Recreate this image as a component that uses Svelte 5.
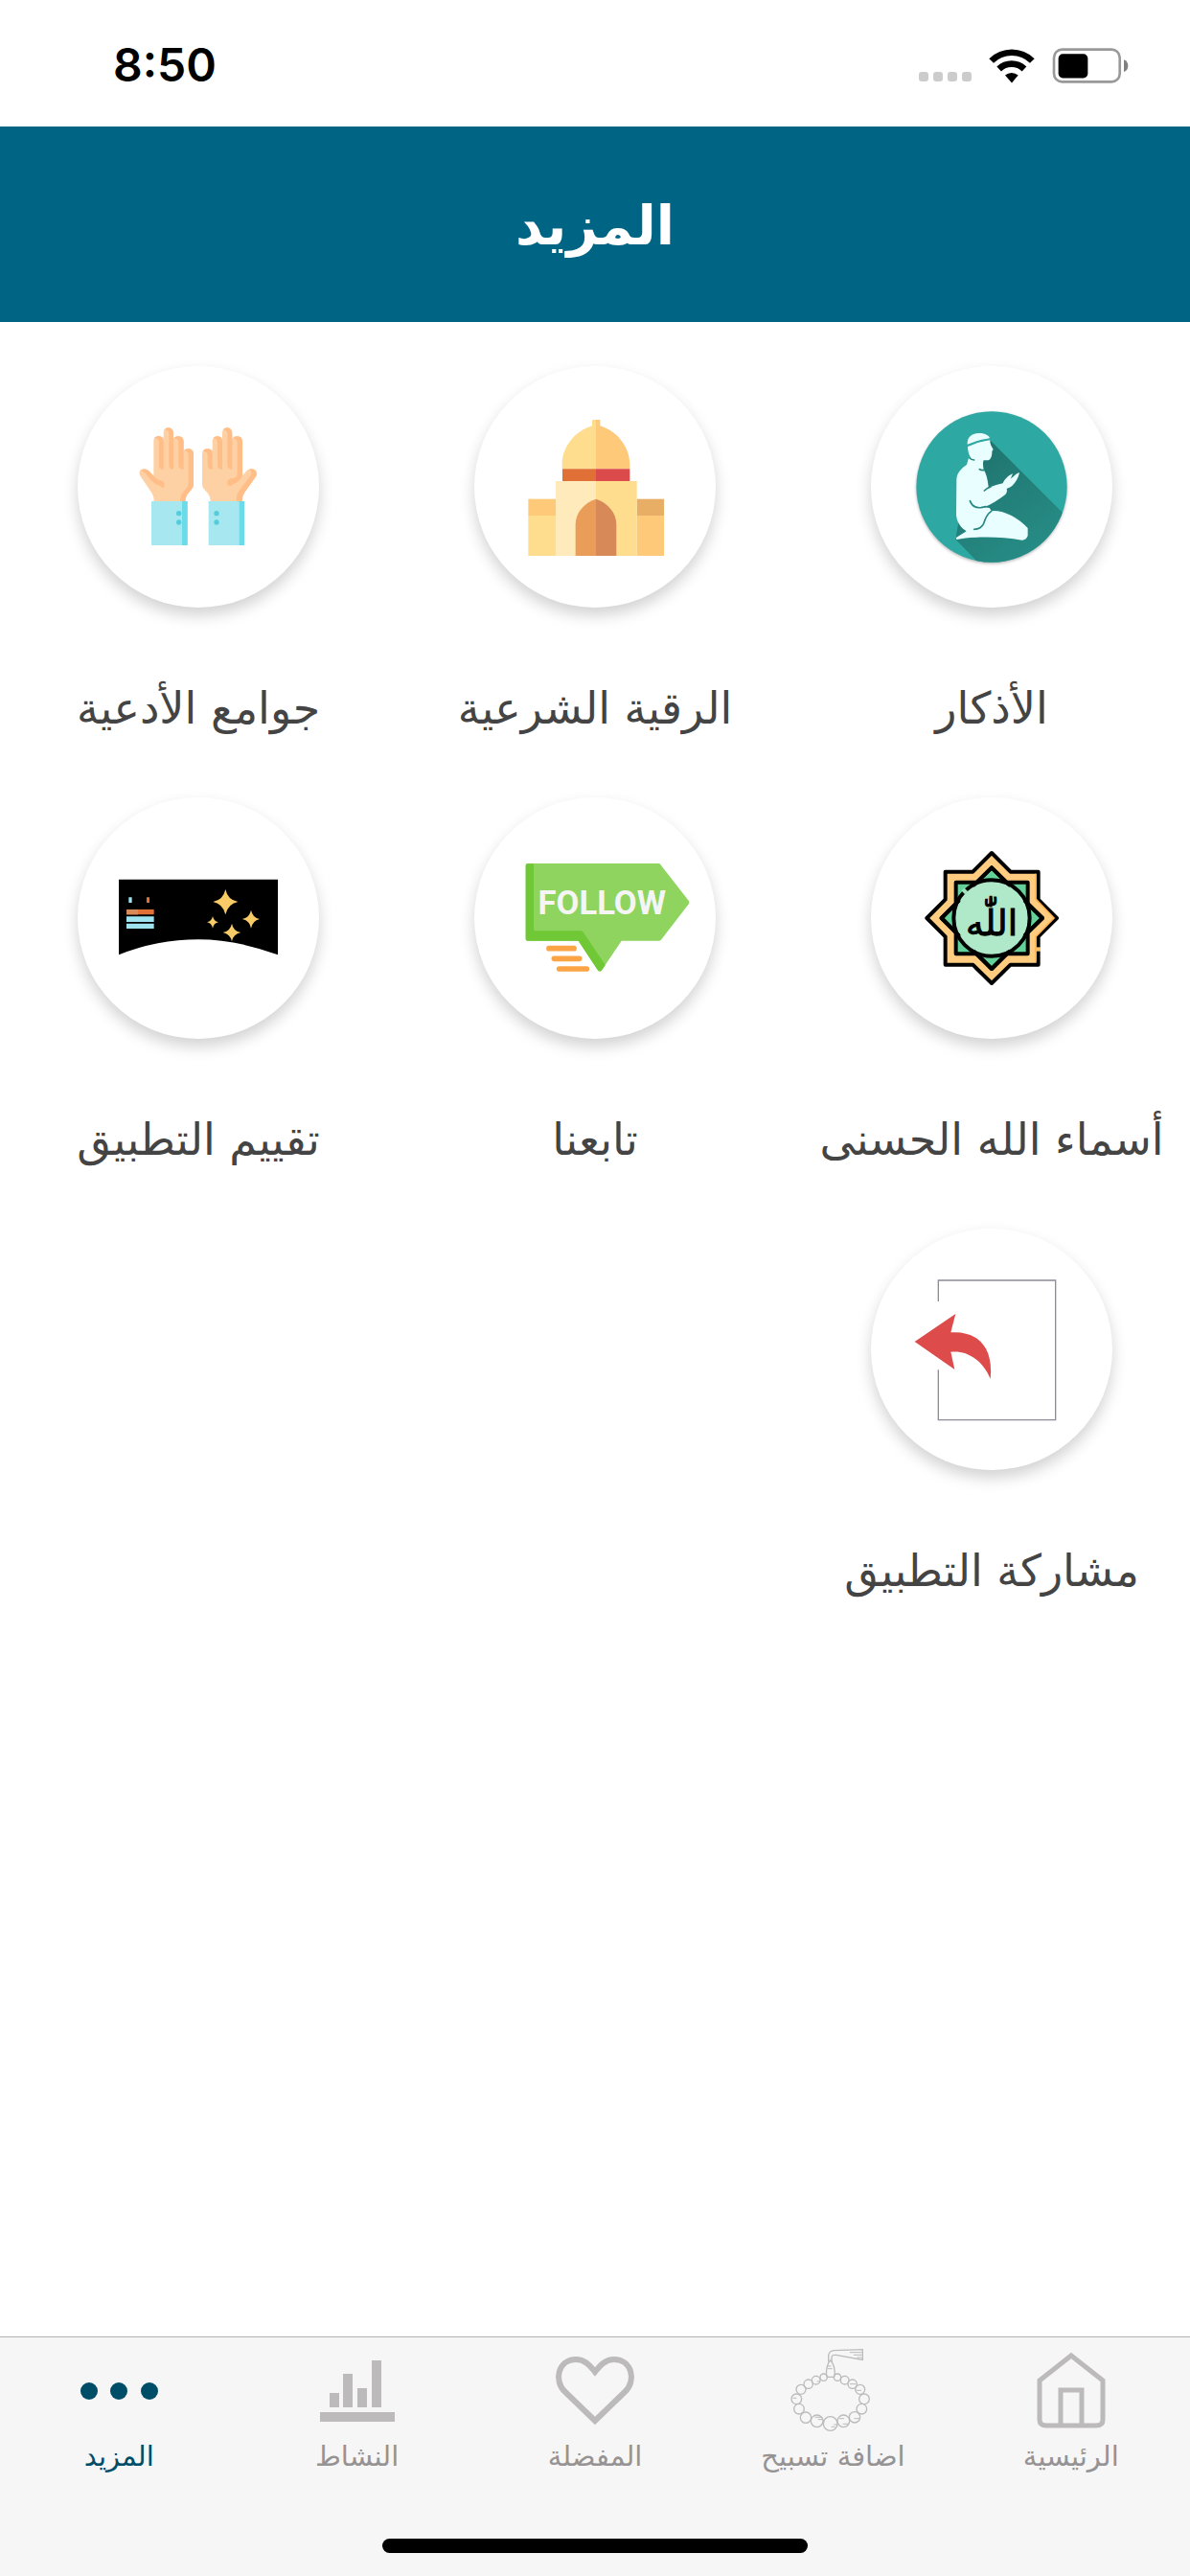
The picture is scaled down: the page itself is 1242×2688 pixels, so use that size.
<script lang="ts">
    type Item = { id: string; label: string };

    const items: Item[] = [
        { id: "athkar", label: "الأذكار" },
        { id: "ruqyah", label: "الرقية الشرعية" },
        { id: "duaa", label: "جوامع الأدعية" },
        { id: "names", label: "أسماء الله الحسنى" },
        { id: "follow", label: "تابعنا" },
        { id: "rate", label: "تقييم التطبيق" },
        { id: "share", label: "مشاركة التطبيق" },
    ];

    const tabs: Item[] = [
        { id: "home", label: "الرئيسية" },
        { id: "tasbih", label: "اضافة تسبيح" },
        { id: "favorites", label: "المفضلة" },
        { id: "activity", label: "النشاط" },
        { id: "more", label: "المزيد" },
    ];

    let active = $state("more");

    // beads of the tasbih: [cx, cy, r]
    const beads = [
        [180, 125, 11], [223, 125, 11], [156, 134, 13], [246, 134, 13],
        [132, 146, 14], [270, 146, 14], [109, 163, 15], [294, 163, 15],
        [95, 193, 16], [307, 193, 16], [103, 224, 16], [299, 224, 16],
        [124, 251, 17], [277, 250, 17], [159, 262, 19], [242, 262, 19],
        [201, 270, 22],
    ];
</script>

<div class="screen" dir="rtl">
    <div class="status" dir="ltr">
        <time>8:50</time>
        <div class="signals">
            <span class="dots"><i></i><i></i><i></i><i></i></span>
            <svg class="wifi" viewBox="275 56 144 110" aria-hidden="true">
                <path d="M276 89 A101 101 0 0 1 418 89 L404 103 A81 81 0 0 0 290 103Z" />
                <path d="M300 114 A67 67 0 0 1 393 114 L379 129 A46 46 0 0 0 314 129Z" />
                <path d="M326 141 A31 31 0 0 1 367 141 L347 165Z" />
            </svg>
            <svg class="battery" viewBox="473 56 240 112" aria-hidden="true">
                <rect x="478" y="61" width="208" height="102" rx="26" fill="none" stroke="#999" stroke-width="8" />
                <rect x="492" y="75" width="93" height="76" rx="14" />
                <path d="M699 93 Q712 98 712 112 Q712 127 699 132Z" fill="#808080" />
            </svg>
        </div>
    </div>

    <header><h1>المزيد</h1></header>

    <main>
        {#each items as item (item.id)}
            <button class="item" type="button">
                <span class="circle">
                    {#if item.id === "athkar"}
                        <svg viewBox="57 66 756 756" aria-hidden="true">
                            <defs>
                                <clipPath id="disc"><circle cx="435" cy="444" r="236" /></clipPath>
                                <linearGradient id="cast" x1="0" y1="0" x2="0.6" y2="1">
                                    <stop offset="0" stop-color="#1f706b" />
                                    <stop offset="1" stop-color="#278f88" />
                                </linearGradient>
                            </defs>
                            <circle class="lift" cx="435" cy="444" r="236" fill="#2ea8a2" />
                            <path clip-path="url(#disc)" d="M430 298 L700 568 L700 720 L430 720 L322 608 L360 380Z" fill="url(#cast)" />
                            <g fill="#e9ffff">
                                <path d="M359 311 C358 287 373 276 396 276 C416 276 427 284 429 292 C405 295 379 303 359 311Z" />
                                <path d="M360 318 C384 308 406 301 430 298 C430 309 432 314 440 327 L436 333 C437 347 431 361 424 361 L410 361 Q406 367 410 391 Q420 404 425 443 L413 455 C430 442 451 438 470 433 C475 421 487 408 501 403 L494 419 C503 414 511 401 522 400 C518 417 511 429 500 440 C491 447 482 449 482 450 Q485 463 478 468 C457 485 432 500 410 508 L428 510 L434 519 C472 516 517 539 548 573 L548 597 Q543 611 530 611 C461 598 379 599 326 609 Q321 605 325 602 L356 583 C339 572 324 554 324 528 L325 421 C326 397 343 385 357 374 L363 353 L370 354 Q360 338 360 318Z" />
                            </g>
                            <g fill="none" stroke="#278680" stroke-width="5" stroke-linecap="round">
                                <path d="M366 354 Q371 359 380 360 M397 389 Q404 393 411 391" />
                                <path d="M367 488 Q376 512 402 509 L416 506" />
                                <path d="M380 577 Q402 576 410 559 C415 541 422 528 434 520" />
                                <path d="M412 456 Q421 448 432 444" />
                            </g>
                        </svg>
                    {:else if item.id === "ruqyah"}
                        <svg viewBox="45 66 756 756" aria-hidden="true">
                            <path d="M426 234 H414 V253 C358 270 320 321 320 374 V388 H426Z" fill="#ffdd8f" />
                            <path d="M426 234 H439 V253 C494 270 532 321 532 374 V388 H426Z" fill="#ffc97a" />
                            <path d="M321 388 H426 V426 H321Z" fill="#e17037" />
                            <path d="M426 388 H532 V426 H426Z" fill="#dc4b4c" />
                            <path d="M214 534 H300 V660 H214Z" fill="#ffdd8f" />
                            <path d="M214 482 H300 V534 H214Z" fill="#ffc97a" />
                            <path d="M554 534 H639 V660 H554Z" fill="#ffc97a" />
                            <path d="M554 482 H639 V534 H554Z" fill="#e9ae65" />
                            <path d="M300 426 H426 V660 H300Z" fill="#ffeabb" />
                            <path d="M426 426 H554 V660 H426Z" fill="#ffdd8f" />
                            <path d="M426 482 C389 494 362 525 362 562 V660 H426Z" fill="#ea9c59" />
                            <path d="M426 482 C463 494 490 525 490 562 V660 H426Z" fill="#d78a58" />
                        </svg>
                    {:else if item.id === "duaa"}
                        <svg viewBox="63 66 756 756" aria-hidden="true">
                            <g fill="#fed1a5">
                                <path d="M302 489 Q302 474 296 464 L260 411 Q251 396 263 390 Q278 383 288 396 L301 410 V300 Q302 286 317 285 Q330 286 332 293 V273 Q334 258 348 258 Q361 259 363 273 V293 Q367 285 379 285 Q394 287 395 300 V332 Q399 324 410 324 Q425 326 426 339 V437 Q426 447 412 461 Q401 472 401 489Z" />
                                <path d="M479 489 Q479 472 468 461 Q453 447 453 437 V339 Q455 325 469 324 Q481 324 485 332 V300 Q487 286 500 285 Q512 286 516 293 V273 Q518 259 531 258 Q545 259 547 273 V293 Q551 285 563 285 Q578 287 579 300 V409 L593 393 Q605 383 618 391 Q629 401 620 413 L585 463 Q578 474 578 489Z" />
                            </g>
                            <g fill="#ffbd87">
                                <path d="M302 292 Q313 281 325 288 Q332 294 332 300 V390 Q318 390 318 376 V304 Q317 291 302 292Z" />
                                <path d="M335 265 Q347 253 359 264 Q363 270 363 280 V390 Q349 389 349 376 V280 Q349 267 335 265Z" />
                                <path d="M364 292 Q376 281 390 289 Q395 295 395 302 V390 Q379 389 379 376 V305 Q379 293 364 292Z" />
                                <path d="M396 331 Q408 320 420 328 Q426 333 426 340 V437 Q425 448 412 461 Q400 473 400 489 H384 Q384 471 396 457 Q410 445 410 433 V345 Q410 332 396 331Z" />
                                <path d="M258 393 Q275 382 289 397 L309 418 Q317 425 328 425 Q336 430 335 440 Q333 449 327 446 Q320 439 309 436 Q301 433 291 421 L272 399 Q266 393 258 393Z" />
                                <path d="M454 332 Q467 320 480 328 Q485 334 485 340 V390 Q470 389 470 376 V345 Q470 334 454 332Z" />
                                <path d="M486 292 Q500 281 512 289 Q516 295 516 302 V390 Q501 389 501 376 V304 Q500 293 486 292Z" />
                                <path d="M518 265 Q531 253 543 264 Q547 270 547 280 V390 Q532 389 532 376 V280 Q532 267 518 265Z" />
                                <path d="M549 292 Q562 281 574 289 Q579 295 579 302 V409 Q573 425 560 431 Q550 434 543 441 Q535 444 532 436 Q530 423 542 418 Q563 418 563 402 V305 Q563 294 549 292Z" />
                                <path d="M600 389 Q613 385 620 393 Q627 403 620 413 L585 463 Q578 474 578 489 H560 Q559 469 569 455 L604 410 Q611 397 600 389Z" />
                            </g>
                            <path d="M294 489 H407 V627 H294Z M473 489 H585 V627 H473Z" fill="#a7e8f0" />
                            <path d="M390 489 H405 Q407 489 407 493 V627 H390Z M569 489 H583 Q585 489 585 493 V627 H569Z" fill="#6bdbe9" />
                            <g fill="#54ccda">
                                <circle cx="380" cy="527" r="8" />
                                <circle cx="380" cy="555" r="8" />
                                <circle cx="498" cy="527" r="8" />
                                <circle cx="498" cy="555" r="8" />
                            </g>
                        </svg>
                    {:else if item.id === "names"}
                        <svg viewBox="57 66 756 756" aria-hidden="true">
                            <g stroke="#000" stroke-width="12" stroke-linejoin="round" stroke-linecap="round">
                                <path d="M435 240 L494 299 H581 V386 L639 444 L581 502 V590 H494 L435 648 L376 590 H290 V502 L232 444 L290 386 V299 H376Z" fill="#ffcc80" />
                                <path d="M323 332 H548 V556 H323Z" fill="#64d19b" />
                                <path d="M435 286 L481 332 H389Z M435 603 L389 556 H481Z M278 444 L323 399 V489Z M594 444 L548 399 V489Z" fill="#64d19b" />
                                <circle cx="435" cy="444" r="119" fill="#b0e8ca" />
                                <path d="M435 286 L490 340 M435 286 L380 340 M435 603 L380 549 M435 603 L490 549 M278 444 L331 391 M278 444 L331 497 M594 444 L540 391 M594 444 L540 497" fill="none" />
                            </g>
                            <path d="M573 305 V384 L630 444 L573 502 V580" fill="none" stroke="#ffb454" stroke-width="5" />
                            <path d="M581 535 V548" stroke="#ffbd62" stroke-width="14" />
                            <path d="M346 364 L355 355" stroke="#9fe3bd" stroke-width="16" />
                            <text class="allah" x="435" y="498">اللّٰه</text>
                        </svg>
                    {:else if item.id === "follow"}
                        <svg viewBox="45 66 756 756" aria-hidden="true">
                            <path d="M212 273 H624 Q628 275 630 279 L717 391 Q719 395 717 399 L631 511 Q629 515 624 515 H506 L445 606 Q438 615 431 606 L371 515 H212 Q206 515 206 509 V279 Q206 273 212 273Z" fill="#8ed45f" />
                            <path d="M212 274 H231 V476 Q231 484 238 484 H378 Q384 484 387 489 L455 591 L445 606 Q438 615 431 606 L371 515 H212 Q206 515 206 509 V279 Q206 274 212 274Z" fill="#71c837" />
                            <path d="M279 539 H357 M295 571 H374 M311 603 H397" stroke="#fba446" stroke-width="17" stroke-linecap="round" />
                            <text class="follow" x="445" y="432">FOLLOW</text>
                        </svg>
                    {:else if item.id === "rate"}
                        <svg viewBox="63 66 756 756" aria-hidden="true">
                            <path d="M192 323 H690 V559 Q560 511 441 511 Q312 511 192 559Z" />
                            <path d="M223 379 H233 V396 H223Z M216 439 H302 V456 H216Z M216 461 H302 V477 H216Z" fill="#9fe3ef" />
                            <path d="M279 379 H288 V396 H279Z M216 417 H302 V433 H216Z" fill="#e17037" />
                            <path d="M216 417 H252 V433 H216Z" fill="#d78a58" />
                            <path d="M526 354 Q533 387 565 393 Q533 400 526 433 Q519 400 487 393 Q519 387 526 354Z M606 419 Q611 443 633 447 Q611 452 606 476 Q601 452 578 447 Q601 443 606 419Z M486 438 Q489 454 504 457 Q489 460 486 476 Q483 460 468 457 Q483 454 486 438Z M546 461 Q550 485 574 489 Q550 494 546 517 Q541 494 518 489 Q541 485 546 461Z" fill="#f8cb66" />
                        </svg>
                    {:else}
                        <svg viewBox="207 66 756 756" aria-hidden="true">
                            <path d="M418 294 V228 H785 V665 H418 V508" fill="none" stroke="#8c8c9a" stroke-width="4" />
                            <path d="M344 420 L472 333 L457 391 C535 385 592 432 581 536 C557 477 507 446 457 452 L469 507Z" fill="#dd4b4b" />
                        </svg>
                    {/if}
                </span>
                <span class="label">{item.label}</span>
            </button>
        {/each}
    </main>

    <footer>
        <nav>
            {#each tabs as tab (tab.id)}
                <a
                    href="#{tab.id}"
                    class:active={active === tab.id}
                    aria-current={active === tab.id ? "page" : undefined}
                    onclick={() => (active = tab.id)}
                >
                    {#if tab.id === "home"}
                        <svg viewBox="0 0 96 96" fill="none" stroke="currentColor" stroke-width="5" aria-hidden="true">
                            <path d="M48 11 L81 37 V78 Q81 84 74 84 H22 Q15 84 15 78 V37Z M37 84 V47 H59 V84" />
                        </svg>
                    {:else if tab.id === "tasbih"}
                        <svg viewBox="64 24 288 288" fill="none" stroke="currentColor" stroke-width="4" aria-hidden="true">
                            {#each beads as [cx, cy, r]}
                                <circle {cx} {cy} {r} />
                            {/each}
                            <path d="M201 72 C190 83 185 112 191 124 H212 C218 112 213 83 201 72Z" />
                            <path d="M195 77 V57 Q197 42 213 41 L302 38 V70 L218 55 Q205 54 205 62 V77" />
                            <path d="M262 47 H300 M274 55 H300 M284 63 H300 M193 90 H203 M193 98 H207 M84 190 H95 M282 166 H298 M153 250 H176 M162 257 H178 M228 254 H244 M240 271 H257 M275 254 H292 M204 280 H216 M212 273 H222 M159 138 H168 M262 146 H280" stroke-width="3" />
                        </svg>
                    {:else if tab.id === "favorites"}
                        <svg viewBox="0 0 96 96" fill="none" stroke="currentColor" stroke-width="6" aria-hidden="true">
                            <path d="M48 79 L17 49 C4 37 10 15 28 15 C38 15 43 22 48 28 C53 22 58 15 68 15 C86 15 92 37 79 49Z" />
                        </svg>
                    {:else if tab.id === "activity"}
                        <svg viewBox="0 0 96 96" fill="currentColor" aria-hidden="true">
                            <path d="M9 70 H87 V80 H9Z M19 50 H29 V65 H19Z M33 30 H43 V65 H33Z M48 45 H58 V65 H48Z M63 16 H73 V65 H63Z" />
                        </svg>
                    {:else}
                        <svg viewBox="0 0 96 96" fill="currentColor" aria-hidden="true">
                            <circle cx="17" cy="48" r="9" />
                            <circle cx="48" cy="48" r="9" />
                            <circle cx="80" cy="48" r="9" />
                        </svg>
                    {/if}
                    <span>{tab.label}</span>
                </a>
            {/each}
        </nav>
        <div class="home-bar"></div>
    </footer>
</div>

<style>
    :global(body) { margin: 0; background: #fff; }
    .screen {
        display: flex;
        flex-direction: column;
        min-height: 100vh;
        font-family: "DejaVu Sans", sans-serif;
    }
    svg { display: block; }

    /* ── status bar ── */
    .status {
        display: flex;
        align-items: center;
        justify-content: space-between;
        box-sizing: border-box;
        height: 132px;
        padding: 4px 64px 0 118px;
    }
    time { font: 600 48px/56px Inter, sans-serif; }
    .signals { display: flex; align-items: center; gap: 18px; }
    .dots { display: flex; gap: 5px; padding-top: 24px; }
    .dots i { width: 10px; height: 10px; border-radius: 3px; background: #ccc; }
    .wifi { width: 48px; height: 37px; }
    .battery { width: 80px; height: 37px; }

    header {
        display: flex;
        align-items: center;
        justify-content: center;
        box-sizing: border-box;
        height: 204px;
        padding-top: 4px;
        background: #006585;
        color: #fff;
    }
    h1 { margin: 0; font-size: 56px; line-height: 72px; font-weight: 700; }

    /* ── grid ── */
    main {
        flex: 1;
        display: grid;
        grid-template-columns: repeat(3, 1fr);
        grid-auto-rows: 450px;
    }
    .item {
        display: flex;
        flex-direction: column;
        align-items: center;
        gap: 72px;
        padding: 46px 0 0;
        border: 0;
        background: none;
        color: #444;
        font: inherit;
        cursor: pointer;
    }
    .circle {
        width: 252px;
        height: 252px;
        border-radius: 50%;
        background: #fff;
        box-shadow: 0 8px 16px rgba(0, 0, 0, 0.18);
    }
    .label { font-size: 46px; line-height: 66px; white-space: nowrap; }
    .lift { filter: drop-shadow(0 4px 4px rgba(0, 0, 0, 0.3)); }
    .follow {
        font: 700 104px Roboto, sans-serif;
        fill: #f5f5f5;
        text-anchor: middle;
        direction: ltr;
    }
    .allah {
        font: 400 112px "DejaVu Sans", sans-serif;
        stroke: #000;
        stroke-width: 3px;
        text-anchor: middle;
    }

    /* ── tab bar ── */
    footer {
        display: flex;
        flex-direction: column;
        align-items: center;
        justify-content: space-between;
        box-sizing: border-box;
        height: 250px;
        padding: 8px 0 24px;
        border-top: 1px solid #b2b2b2;
        background: #f6f6f6;
    }
    nav { display: grid; grid-template-columns: repeat(5, 1fr); width: 100%; }
    nav a {
        display: flex;
        flex-direction: column;
        align-items: center;
        color: #bcbaba;
        text-decoration: none;
    }
    nav svg { width: 96px; height: 96px; }
    nav span { font-size: 29px; line-height: 40px; color: #959393; white-space: nowrap; }
    nav .active, nav .active span { color: #004d68; }
    .home-bar { width: 444px; height: 15px; border-radius: 8px; background: #000; }
</style>
